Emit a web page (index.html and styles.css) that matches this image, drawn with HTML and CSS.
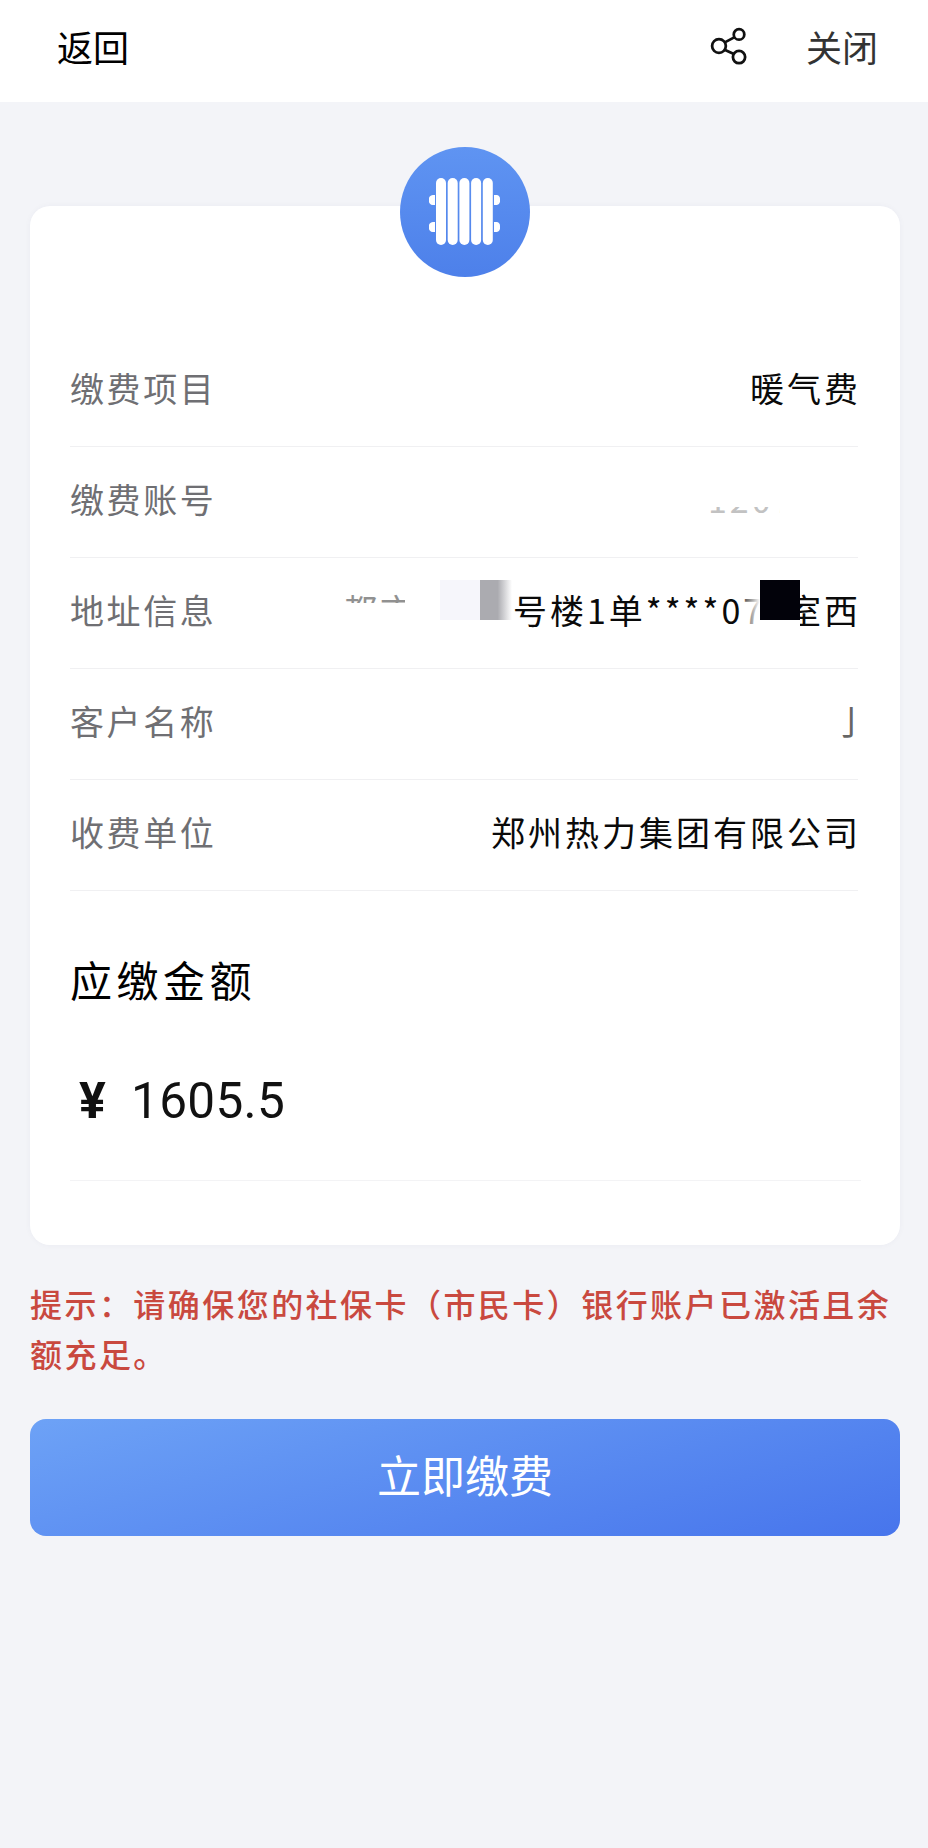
FILE: index.html
```html
<!DOCTYPE html>
<html lang="zh-CN">
<head>
    <meta charset="UTF-8">
    <meta name="viewport" content="width=device-width, initial-scale=1.0">
    <title>立即缴费</title>
    <link rel="stylesheet" href="styles.css">
</head>
<body>
    <header class="topbar">
        <span class="topbar-back">返回</span>
        <div class="topbar-right">
            <svg class="share-icon" viewBox="0 0 36 36" fill="none" stroke="#111" stroke-width="2.6">
                <circle cx="8.5" cy="18" r="6.5"/>
                <circle cx="27.5" cy="7" r="5"/>
                <circle cx="27.5" cy="28.5" r="5.8"/>
                <path d="M14 14.6 23.4 9.6M13.8 21.6 22.6 25.6"/>
            </svg>
            <span class="topbar-close">关闭</span>
        </div>
    </header>

    <main class="content">
        <section class="card">
            <div class="card-badge">
                <svg viewBox="0 0 72 68" width="72" height="68" fill="#fff">
                    <rect x="7" y="0" width="10" height="67" rx="5"/>
                    <rect x="18.7" y="0" width="10" height="67" rx="5"/>
                    <rect x="30.4" y="0" width="10" height="67" rx="5"/>
                    <rect x="42.1" y="0" width="10" height="67" rx="5"/>
                    <rect x="53.8" y="0" width="10" height="67" rx="5"/>
                    <path d="M6 17h-2a4 4 0 0 0-4 5 4 4 0 0 0 4 5h2zM6 44h-2a4 4 0 0 0-4 5 4 4 0 0 0 4 5h2z"/>
                    <path d="M65 17h3a4 4 0 0 1 3 4v3a4 4 0 0 1-3 3h-3zM65 44h3a4 4 0 0 1 3 4v3a4 4 0 0 1-3 3h-3z"/>
                </svg>
            </div>

            <div class="row">
                <span class="row-label">缴费项目</span>
                <span class="row-value">暖气费</span>
            </div>
            <div class="row">
                <span class="row-label">缴费账号</span>
                <span class="row-value row-value-faint">1207123</span>
                <i class="mask mask-account"></i>
                <i class="mask mask-account-end"></i>
            </div>
            <div class="row">
                <span class="row-label">地址信息</span>
                <span class="row-value">都市花园6号楼1单****071室西</span>
                <i class="mask mask-addr-a"></i>
                <i class="mask mask-addr-b"></i>
                <i class="mask mask-addr-c"></i>
                <i class="mask mask-addr-d"></i>
                <i class="mask mask-addr-e"></i>
            </div>
            <div class="row">
                <span class="row-label">客户名称</span>
                <span class="row-value row-value-grey">亅</span>
            </div>
            <div class="row">
                <span class="row-label">收费单位</span>
                <span class="row-value">郑州热力集团有限公司</span>
            </div>

            <div class="amount">
                <div class="amount-title">应缴金额</div>
                <div class="amount-value"><span class="amount-sign">¥</span>1605.5</div>
            </div>
        </section>

        <p class="hint">提示：请确保您的社保卡（市民卡）银行账户已激活且余额充足。</p>

        <button class="pay-btn" type="button">立即缴费</button>
    </main>
</body>
</html>
```

FILE: styles.css
```css
* {
    box-sizing: border-box;
}
body {
    margin: 0;
    min-height: 1848px;
    background-color: #f3f4f8;
    font-family: "Noto Sans CJK SC", "Noto Sans", sans-serif;
    color: #000;
}
.topbar {
    height: 102px;
    padding: 0 50px 10px 57px;
    background-color: #fff;
    display: flex;
    align-items: center;
    justify-content: space-between;
    font-size: 36px;
}
.topbar-right {
    display: flex;
    align-items: center;
    gap: 58px;
}
.topbar-close {
    color: #333;
}
.share-icon {
    width: 38px;
    height: 38px;
}
.content {
    padding: 104px 28px 0 30px;
}
.card {
    position: relative;
    height: 1039px;
    padding: 130px 42px 0 40px;
    background-color: #fff;
    border-radius: 20px;
    box-shadow: 0 0 6px rgba(40, 50, 90, 0.04);
}
.card-badge {
    position: absolute;
    top: -59px;
    left: 370px;
    width: 130px;
    height: 130px;
    border-radius: 50%;
    background: linear-gradient(180deg, #5f94f2, #4d80ea);
    display: flex;
    align-items: center;
    justify-content: center;
}
.row {
    position: relative;
    height: 111px;
    padding-bottom: 8px;
    border-bottom: 1px solid #f0f0f2;
    display: flex;
    align-items: center;
    justify-content: space-between;
    font-size: 34px;
    letter-spacing: 2.6px;
    white-space: nowrap;
}
.row-label {
    color: #6f6f73;
}
.row-value {
    margin-right: -3px;
    letter-spacing: 3px;
    color: #0a0a0a;
}
.row-value-faint {
    color: #a8a8a8;
}
.row-value-grey {
    margin-right: -13px;
    color: #666;
}
.mask {
    position: absolute;
    display: block;
}
.mask-account {
    left: 620px;
    top: 14px;
    width: 100px;
    height: 82px;
    background: linear-gradient(180deg, #fff 0, #fff 46px, rgba(255, 255, 255, 0.3) 46px, rgba(255, 255, 255, 0.3) 52px, #fff 52px);
}
.mask-account-end {
    left: 710px;
    top: 14px;
    width: 80px;
    height: 82px;
    background-color: #fff;
}
.mask-addr-a {
    left: 240px;
    top: 20px;
    width: 170px;
    height: 70px;
    background:
        linear-gradient(90deg, transparent 95px, #fff 95px),
        linear-gradient(180deg, rgba(255, 255, 255, 0.55) 0, rgba(255, 255, 255, 0.55) 25px, #fff 25px);
}
.mask-addr-b {
    left: 370px;
    top: 22px;
    width: 40px;
    height: 40px;
    background-color: #f6f6fb;
}
.mask-addr-c {
    left: 410px;
    top: 22px;
    width: 32px;
    height: 50px;
    background: linear-gradient(180deg, transparent 40px, #fff 40px), linear-gradient(90deg, #ababb0 0, #ababb0 55%, #fff 100%);
}
.mask-addr-d {
    left: 672px;
    top: 20px;
    width: 58px;
    height: 60px;
    background: linear-gradient(90deg, rgba(255, 255, 255, 0.2), #fff 18px);
}
.mask-addr-e {
    left: 690px;
    top: 22px;
    width: 40px;
    height: 40px;
    background-color: #02020a;
}
.amount {
    height: 290px;
    margin-right: -3px;
    padding: 66px 0 0;
    border-bottom: 1px solid #f3f3f5;
}
.amount-title {
    font-size: 42px;
    line-height: 44px;
    letter-spacing: 4.5px;
}
.amount-value {
    margin-top: 70px;
    font-family: Roboto, "Liberation Sans", sans-serif;
    font-size: 49.5px;
    line-height: 60px;
    letter-spacing: 0.3px;
    color: #111;
    display: flex;
    align-items: center;
}
.amount-sign {
    margin: 0 25px 0 9px;
    font-size: 50px;
    font-weight: 700;
}
.hint {
    margin: 33px -4px 0 0;
    font-size: 32px;
    line-height: 50px;
    letter-spacing: 2.45px;
    font-weight: 500;
    color: #c9493f;
}
.pay-btn {
    display: block;
    width: 100%;
    height: 117px;
    margin-top: 41px;
    padding: 0 0 8px;
    border: none;
    border-radius: 16px;
    background: linear-gradient(165deg, #6da2f6, #4775ec);
    color: #fff;
    font-family: inherit;
    font-size: 44px;
    cursor: pointer;
}
```
